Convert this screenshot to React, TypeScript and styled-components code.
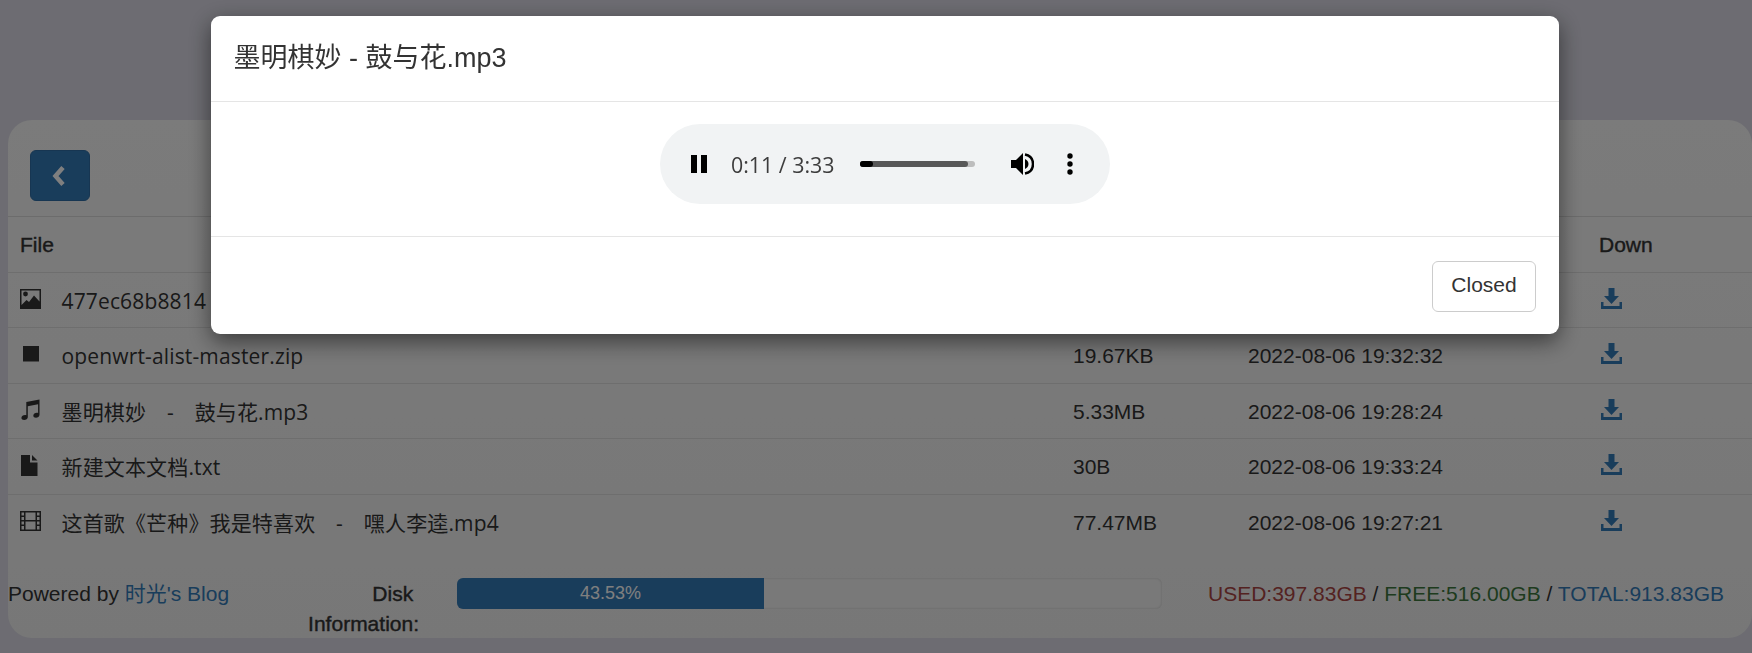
import React from 'react'
import styled, { createGlobalStyle } from 'styled-components'

const GlobalStyle = createGlobalStyle`
  html, body {
    margin: 0;
    height: 100%;
    overflow: hidden;
    background: #dad9e4;
  }
  body {
    font-family: "Liberation Sans", "Noto Sans CJK SC", sans-serif;
    font-size: 21px;
    line-height: 30px;
    color: #333;
  }
`

const Page = styled.div`
  padding: 120px 0 0 8px;
`

const Card = styled.div`
  height: 518px;
  background: linear-gradient(#f6f6f6, #efefef);
  border-radius: 24px;
  overflow: hidden;
`

const CardHeading = styled.div`
  height: 96px;
  box-sizing: border-box;
  padding: 30px 0 0 22px;
`

const BackButton = styled.button`
  display: flex;
  align-items: center;
  justify-content: center;
  width: 60px;
  height: 51px;
  padding: 0 2px 0 0;
  background: #337ab7;
  border: 1.5px solid #2e6da4;
  border-radius: 6px;
`

const FileTable = styled.table`
  width: 100%;
  border-collapse: collapse;
  table-layout: fixed;
`

const HeadCell = styled.th<{ $width?: number }>`
  width: ${(p) => (p.$width ? `${p.$width}px` : 'auto')};
  height: 55.5px;
  box-sizing: border-box;
  padding: 2px 12px 0;
  text-align: left;
  font-weight: 400;
  -webkit-text-stroke: 0.4px #333;
  border-top: 1.5px solid #d8d8d8;
  border-bottom: 1.5px solid #dcdcdc;
`

const Row = styled.tr`
  height: 55.5px;
  & + & td {
    border-top: 1.5px solid #ddd;
  }
`

const Cell = styled.td`
  box-sizing: border-box;
  padding: 2px 12px 0;
`

const NameCell = styled.div`
  display: flex;
  align-items: center;
  height: 52px;
`

const IconSlot = styled.span`
  flex: 0 0 41.5px;
  display: flex;
  align-items: center;
  height: 30px;
  margin-top: -4px;
`

const FileName = styled.span`
  font-family: "Open Sans", "Noto Sans CJK SC", sans-serif;
  letter-spacing: 0.15px;
  word-spacing: -0.4px;
  white-space: pre;
`

const DownIcon = styled.svg`
  display: block;
  margin: -5px 0 0 2px;
`

const Footer = styled.div`
  display: flex;
  align-items: flex-start;
  margin-top: 28px;
`

const Powered = styled.div`
  flex: 0 0 250px;
  padding-top: 1px;
`

const BlogLink = styled.a`
  color: #337ab7;
`

const DiskLabel = styled.div`
  flex: 0 0 161px;
  padding-top: 1px;
  text-align: right;
  -webkit-text-stroke: 0.4px #333;
`

const Progress = styled.div`
  flex: 0 0 705px;
  height: 31px;
  margin-left: 38px;
  background: #f3f3f3;
  border-radius: 6px;
  overflow: hidden;
  box-shadow: inset 0 0 3px rgba(0, 0, 0, 0.16);
`

const ProgressBar = styled.div`
  height: 100%;
  background: #337ab7;
  color: #fff;
  font-size: 18px;
  line-height: 31px;
  text-align: center;
`

const Stats = styled.div`
  margin-left: 46px;
  padding-top: 1px;
  white-space: nowrap;
`

const Stat = styled.span<{ $color: string }>`
  color: ${(p) => p.$color};
`

const ModalLayer = styled.div`
  position: fixed;
  inset: 0;
  background: rgba(0, 0, 0, 0.5);
`

const Modal = styled.div`
  position: absolute;
  left: 211px;
  top: 16px;
  width: 1348px;
  height: 318px;
  display: flex;
  flex-direction: column;
  background: #fff;
  border-radius: 9px;
  box-shadow: 0 7.5px 22px rgba(0, 0, 0, 0.5);
`

const ModalHeader = styled.div`
  height: 85.5px;
  box-sizing: border-box;
  padding: 0 22.5px;
  display: flex;
  align-items: center;
  border-bottom: 1.5px solid #e5e5e5;
`

const ModalTitle = styled.h4`
  margin: 0;
  font-size: 27px;
  font-weight: 400;
  line-height: 38px;
  color: #333;
`

const ModalBody = styled.div`
  height: 135px;
  box-sizing: border-box;
  border-bottom: 1.5px solid #e5e5e5;
  display: flex;
  justify-content: center;
  padding: 22.5px 0 0 0;
`

const Player = styled.div`
  width: 450px;
  height: 80px;
  box-sizing: border-box;
  padding-left: 31px;
  display: flex;
  align-items: center;
  background: #f1f3f4;
  border-radius: 40px;
`

const PlayerTime = styled.span`
  margin-left: 24px;
  width: 129px;
  padding-top: 1px;
  font-family: "Open Sans", sans-serif;
  font-size: 21.4px;
  color: #3c3c3c;
`

const Track = styled.div`
  position: relative;
  width: 115px;
  height: 6px;
  background: #bdbdbd;
  border-radius: 3px;
`

const Buffered = styled.div`
  position: absolute;
  left: 0;
  top: 0;
  bottom: 0;
  background: #585858;
  border-radius: 3px;
`

const Played = styled(Buffered)`
  background: #000;
`

const PlayerIcon = styled.svg<{ $left: number }>`
  display: block;
  margin-left: ${(p) => p.$left}px;
`

const ModalFooter = styled.div`
  flex: 1;
  display: flex;
  justify-content: flex-end;
  align-items: flex-start;
  padding: 24px 23px 0 0;
`

const CloseButton = styled.button`
  width: 104px;
  height: 51px;
  padding: 0 0 2px;
  font: inherit;
  color: #333;
  background: #fff;
  border: 1.5px solid #ccc;
  border-radius: 6px;
`

const PictureIcon = () => (
  <svg width="21" height="20" viewBox="0 0 21 20">
    <path
      fill="#333"
      fillRule="evenodd"
      d="M0 0h21v20H0zM1.5 1.500v14.500l5-5 2.500 2 5-6.500 5.500 6V1.500z"
    />
    <circle cx="5.500" cy="5" r="2.400" fill="#333" />
  </svg>
)

const StopIcon = () => (
  <svg width="21" height="16" viewBox="0 0 21 16">
    <rect x="3" y="0" width="16" height="15.500" fill="#333" />
  </svg>
)

const MusicIcon = () => (
  <svg width="21" height="21" viewBox="0 0 21 21">
    <path
      fill="#333"
      d="M19.500 0.500v15.200c0 1.700-1.800 3-3.600 3-1.500 0-2.600-.8-2.600-2 0-1.600 1.700-2.900 3.600-2.900.5 0 .9.100 1.200.2V5.200L7.800 7.200v11c0 1.500-1.800 2.800-3.700 2.800C2.600 21 1.400 20.200 1.400 19c0-1.600 1.800-2.900 3.600-2.900.5 0 .9.100 1.300.2V3z"
    />
  </svg>
)

const FileIcon = () => (
  <svg width="21" height="21" viewBox="0 0 21 21">
    <path fill="#333" d="M1 0h9v7.500h7.500V21H1zM12 0l5.500 5.500H12z" />
  </svg>
)

const FilmIcon = () => (
  <svg width="21" height="20" viewBox="0 0 21 20">
    <path
      fill="#333"
      fillRule="evenodd"
      d="M0 0h21v20H0zM1.500 1.500v3h2.500v-3zM1.500 6v3h2.500V6zM1.500 10.500v3h2.500v-3zM1.500 15v3.500h2.500V15zM17 1.500v3h2.500v-3zM17 6v3h2.500V6zM17 10.500v3h2.500v-3zM17 15v3.500h2.500V15zM5.500 1.500v7.500h10V1.500zM5.500 10.500v8h10v-8z"
    />
  </svg>
)

const rows = [
  { icon: <PictureIcon />, name: '477ec68b8814', size: '', date: '' },
  { icon: <StopIcon />, name: 'openwrt-alist-master.zip', size: '19.67KB', date: '2022-08-06 19:32:32' },
  { icon: <MusicIcon />, name: '墨明棋妙    -    鼓与花.mp3', size: '5.33MB', date: '2022-08-06 19:28:24' },
  { icon: <FileIcon />, name: '新建文本文档.txt', size: '30B', date: '2022-08-06 19:33:24' },
  { icon: <FilmIcon />, name: '这首歌《芒种》我是特喜欢    -    嘿人李逵.mp4', size: '77.47MB', date: '2022-08-06 19:27:21' },
]

export default function App() {
  return (
    <>
      <GlobalStyle />
      <Page>
        <Card>
          <CardHeading>
            <BackButton>
              <svg width="14" height="20" viewBox="0 0 14 20">
                <path d="M11 1.500L3.500 10l7.500 8.500" fill="none" stroke="#fff" strokeWidth="4.500" />
              </svg>
            </BackButton>
          </CardHeading>
          <FileTable>
            <thead>
              <tr>
                <HeadCell $width={1053}>File</HeadCell>
                <HeadCell $width={175}></HeadCell>
                <HeadCell $width={351}></HeadCell>
                <HeadCell>Down</HeadCell>
              </tr>
            </thead>
            <tbody>
              {rows.map((row, index) => (
                <Row key={index}>
                  <Cell>
                    <NameCell>
                      <IconSlot>{row.icon}</IconSlot>
                      <FileName>{row.name}</FileName>
                    </NameCell>
                  </Cell>
                  <Cell>{row.size}</Cell>
                  <Cell>{row.date}</Cell>
                  <Cell>
                    <DownIcon width="21" height="21" viewBox="0 0 21 21">
                      <path fill="#337ab7" d="M7.500 0h6v8h4.500l-7.500 8-7.500-8h4.500z" />
                      <path fill="#337ab7" d="M0 14h2.500v4h16v-4H21v7H0z" />
                    </DownIcon>
                  </Cell>
                </Row>
              ))}
            </tbody>
          </FileTable>
          <Footer>
            <Powered>
              Powered by <BlogLink>时光's Blog</BlogLink>
            </Powered>
            <DiskLabel>
              Disk&nbsp;
              <br />
              Information:
            </DiskLabel>
            <Progress>
              <ProgressBar style={{ width: '43.53%' }}>43.53%</ProgressBar>
            </Progress>
            <Stats>
              <Stat $color="#a94442">USED:397.83GB</Stat> / <Stat $color="#3c763d">FREE:516.00GB</Stat> /{' '}
              <Stat $color="#337ab7">TOTAL:913.83GB</Stat>
            </Stats>
          </Footer>
        </Card>
      </Page>
      <ModalLayer>
        <Modal>
          <ModalHeader>
            <ModalTitle>墨明棋妙 - 鼓与花.mp3</ModalTitle>
          </ModalHeader>
          <ModalBody>
            <Player>
              <svg width="16" height="18" viewBox="0 0 16 18">
                <path d="M0 0h6v18H0zM10 0h6v18h-6z" fill="#000" />
              </svg>
              <PlayerTime>0:11 / 3:33</PlayerTime>
              <Track>
                <Buffered style={{ width: '94%' }} />
                <Played style={{ width: '11%' }} />
              </Track>
              <PlayerIcon $left={36} width="23" height="22" viewBox="0 0 23 22">
                <path fill="#000" d="M0 7h5l7-7v22l-7-7H0z" />
                <path fill="none" stroke="#000" strokeWidth="2.500" d="M14 1.500c5.200 1 8 4.800 8 9.500s-2.800 8.500-8 9.500" />
                <path fill="#000" d="M14 6c2.200 1 3.500 2.800 3.500 5s-1.300 4-3.500 5z" />
              </PlayerIcon>
              <PlayerIcon $left={33} width="6" height="22" viewBox="0 0 6 22">
                <circle cx="3" cy="3" r="2.700" fill="#000" />
                <circle cx="3" cy="11" r="2.700" fill="#000" />
                <circle cx="3" cy="19" r="2.700" fill="#000" />
              </PlayerIcon>
            </Player>
          </ModalBody>
          <ModalFooter>
            <CloseButton>Closed</CloseButton>
          </ModalFooter>
        </Modal>
      </ModalLayer>
    </>
  )
}
